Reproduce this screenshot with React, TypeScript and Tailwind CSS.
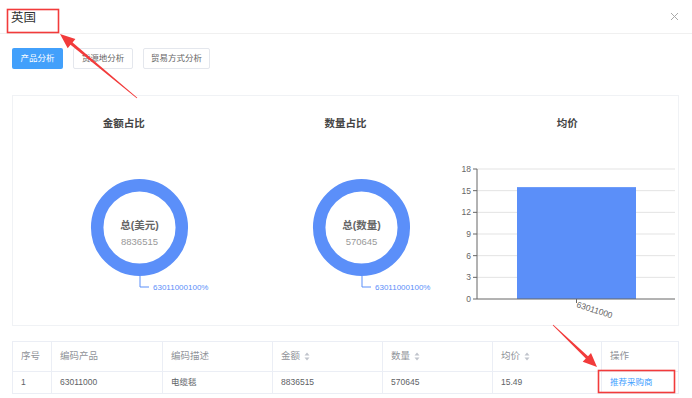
import React from "react";

const BLUE = "#5b8ff9";

type Pt = [number, number];

function arrowPoints(tail: Pt, tip: Pt, head = 14, half = 6): string {
  const dx = tip[0] - tail[0];
  const dy = tip[1] - tail[1];
  const len = Math.hypot(dx, dy);
  const ux = dx / len;
  const uy = dy / len;
  const nx = -uy;
  const ny = ux;
  const bx = tip[0] - ux * head;
  const by = tip[1] - uy * head;
  const pts: Pt[] = [
    [tail[0] + nx * 0.4, tail[1] + ny * 0.4],
    [bx + nx * 1.6, by + ny * 1.6],
    [bx + nx * half, by + ny * half],
    tip,
    [bx - nx * half, by - ny * half],
    [bx - nx * 1.6, by - ny * 1.6],
    [tail[0] - nx * 0.4, tail[1] - ny * 0.4],
  ];
  return pts.map((p) => `${p[0].toFixed(1)},${p[1].toFixed(1)}`).join(" ");
}

function Donut({ title, label, value }: { title: string; label: string; value: string }) {
  return (
    <svg width="222" height="185" className="block overflow-visible">
      <circle cx="126.5" cy="92.5" r="42.3" fill="none" stroke={BLUE} strokeWidth="12.5" />
      <text x="126.5" y="94" textAnchor="middle" fontSize="10.5" fontWeight="600" fill="#666">
        {label}
      </text>
      <text x="126.5" y="110" textAnchor="middle" fontSize="9.5" fill="#999">
        {value}
      </text>
      <polyline points="127,141 127,152 136,152" fill="none" stroke={BLUE} strokeWidth="1" />
      <text x="140" y="155" fontSize="8" fill={BLUE}>
        {title}
      </text>
    </svg>
  );
}

function BarChart() {
  const ticks = [18, 15, 12, 9, 6, 3, 0];
  const y0 = 164;
  const y18 = 34;
  const yOf = (v: number) => y0 - ((y0 - y18) * v) / 18;
  return (
    <svg width="222" height="185" className="block overflow-visible">
      {ticks.map((t) => (
        <g key={t}>
          {t !== 0 && <line x1="21" x2="219" y1={yOf(t)} y2={yOf(t)} stroke="#e3e3e3" strokeWidth="1" />}
          <line x1="17" x2="21" y1={yOf(t)} y2={yOf(t)} stroke="#666" strokeWidth="1" />
          <text x="15" y={yOf(t) + 3} textAnchor="end" fontSize="8.5" fill="#666">
            {t}
          </text>
        </g>
      ))}
      <rect x="61" y={yOf(15.49)} width="119" height={y0 - yOf(15.49)} fill={BLUE} />
      <line x1="21" x2="21" y1={y18} y2={y0} stroke="#666" strokeWidth="1" />
      <line x1="21" x2="219" y1={y0} y2={y0} stroke="#666" strokeWidth="1" />
      <line x1="120.5" x2="120.5" y1={y0} y2={y0 + 4} stroke="#666" strokeWidth="1" />
      <text x="120" y={y0 + 8} fontSize="8.5" fill="#666" transform={`rotate(18 120 ${y0 + 8})`}>
        63011000
      </text>
    </svg>
  );
}

function SortIcon() {
  return (
    <svg width="6" height="9" viewBox="0 0 6 9" className="ml-1 inline-block">
      <path d="M3 0.5 L5.5 3.5 H0.5 Z" fill="#c0c4cc" />
      <path d="M3 8.5 L5.5 5.5 H0.5 Z" fill="#c0c4cc" />
    </svg>
  );
}

const columns = [
  { title: "序号", w: "w-[39px]" },
  { title: "编码产品", w: "w-[111px]" },
  { title: "编码描述", w: "w-[110px]" },
  { title: "金额", w: "w-[110px]", sort: true },
  { title: "数量", w: "w-[110px]", sort: true },
  { title: "均价", w: "w-[109px]", sort: true },
  { title: "操作", w: "flex-1" },
];

const row = ["1", "63011000", "电缆毯", "8836515", "570645", "15.49"];

export default function App() {
  return (
    <div
      className="relative h-[398px] w-[692px] overflow-hidden bg-white text-[#333]"
      style={{ fontFamily: '"Liberation Sans", "Noto Sans CJK SC", sans-serif' }}
    >
      {/* header */}
      <div className="flex h-[34px] items-center justify-between border-b border-[#f0f0f0] pl-[11px] pr-[13px]">
        <span className="pt-[3px] text-[12.5px] leading-none text-[#333]">英国</span>
        <svg width="9" height="9" viewBox="0 0 9 9">
          <path d="M1 1 L8 8 M8 1 L1 8" stroke="#aaa" strokeWidth="1" />
        </svg>
      </div>

      {/* tabs */}
      <div className="mt-[14px] flex gap-[10px] pl-[12px]">
        <button className="h-[21px] w-[51px] rounded-[2px] bg-[#42a0fb] text-[8.5px] text-white">产品分析</button>
        <button className="h-[21px] w-[60px] rounded-[2px] border border-[#e4e7ed] text-[8.5px] text-[#666]">货源地分析</button>
        <button className="h-[21px] w-[67px] rounded-[2px] border border-[#e4e7ed] text-[8.5px] text-[#666]">贸易方式分析</button>
      </div>

      {/* charts card */}
      <div className="mx-[12px] mt-[26px] grid h-[231px] w-[667px] grid-cols-3 border border-[#f0f2f5]">
        {[
          { t: "金额占比", el: <Donut title="63011000100%" label="总(美元)" value="8836515" /> },
          { t: "数量占比", el: <Donut title="63011000100%" label="总(数量)" value="570645" /> },
          { t: "均价", el: <BarChart /> },
        ].map((c) => (
          <div key={c.t} className="flex flex-col items-center">
            <div className="mt-[20px] h-[14px] text-[10.5px] font-bold leading-[14px] text-[#444]">{c.t}</div>
            <div className="mt-[5px] self-start">{c.el}</div>
          </div>
        ))}
      </div>

      {/* table */}
      <div className="mx-[12px] mt-[15px] w-[667px] border-l border-t border-[#ebeef5] text-[8.5px]">
        <div className="flex h-[30px] border-b border-[#ebeef5] text-[9.5px] text-[#909399]">
          {columns.map((c) => (
            <div key={c.title} className={`${c.w} flex items-center border-r border-[#ebeef5] px-[8px]`}>
              {c.title}
              {c.sort && <SortIcon />}
            </div>
          ))}
        </div>
        <div className="flex h-[22px] border-b border-[#ebeef5] text-[#606266]">
          {columns.map((c, i) => (
            <div key={c.title} className={`${c.w} flex items-center border-r border-[#ebeef5] px-[8px]`}>
              {i < row.length ? row[i] : <span className="text-[#409eff]">推荐采购商</span>}
            </div>
          ))}
        </div>
      </div>

      {/* annotations */}
      <svg className="pointer-events-none absolute left-0 top-0" width="692" height="398">
        <rect x="7.5" y="9.5" width="51" height="23" fill="none" stroke="#f23b3b" strokeWidth="1.6" />
        <rect x="598.5" y="370.5" width="76" height="22" fill="none" stroke="#f23b3b" strokeWidth="1.6" />
        <polygon points={arrowPoints([137, 98], [60, 34], 15, 6)} fill="#f23b3b" />
        <polygon points={arrowPoints([553, 325], [597, 367], 14, 6)} fill="#f23b3b" />
      </svg>
    </div>
  );
}
